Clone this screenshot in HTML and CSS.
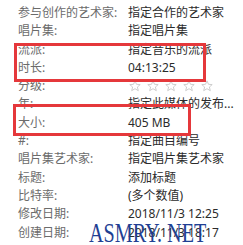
FILE: index.html
```html
<!DOCTYPE html>
<html lang="zh">
<head>
<meta charset="utf-8">
<link rel="stylesheet" href="styles.css">
</head>
<body>
<div class="props">
  <div class="row"><span class="label">参与创作的艺术家:</span><span class="value">指定合作的艺术家</span></div>
  <div class="row"><span class="label">唱片集:</span><span class="value">指定唱片集</span></div>
  <div class="row"><span class="label">流派:</span><span class="value">指定音乐的流派</span></div>
  <div class="row"><span class="label">时长:</span><span class="value">04:13:25</span></div>
  <div class="row"><span class="label">分级:</span><span class="value stars">
    <svg viewBox="0 0 12 12"><path d="M6 .8l1.5 3.5 3.7.3-2.8 2.4.9 3.7L6 8.7 2.7 10.7l.9-3.7L.8 4.6l3.7-.3z"/></svg>
    <svg viewBox="0 0 12 12"><path d="M6 .8l1.5 3.5 3.7.3-2.8 2.4.9 3.7L6 8.7 2.7 10.7l.9-3.7L.8 4.6l3.7-.3z"/></svg>
    <svg viewBox="0 0 12 12"><path d="M6 .8l1.5 3.5 3.7.3-2.8 2.4.9 3.7L6 8.7 2.7 10.7l.9-3.7L.8 4.6l3.7-.3z"/></svg>
    <svg viewBox="0 0 12 12"><path d="M6 .8l1.5 3.5 3.7.3-2.8 2.4.9 3.7L6 8.7 2.7 10.7l.9-3.7L.8 4.6l3.7-.3z"/></svg>
    <svg viewBox="0 0 12 12"><path d="M6 .8l1.5 3.5 3.7.3-2.8 2.4.9 3.7L6 8.7 2.7 10.7l.9-3.7L.8 4.6l3.7-.3z"/></svg>
  </span></div>
  <div class="row"><span class="label">年:</span><span class="value">指定此媒体的发布...</span></div>
  <div class="row"><span class="label">大小:</span><span class="value">405 MB</span></div>
  <div class="row"><span class="label">#:</span><span class="value">指定曲目编号</span></div>
  <div class="row"><span class="label">唱片集艺术家:</span><span class="value">指定唱片集艺术家</span></div>
  <div class="row"><span class="label">标题:</span><span class="value">添加标题</span></div>
  <div class="row"><span class="label">比特率:</span><span class="value">(多个数值)</span></div>
  <div class="row"><span class="label">修改日期:</span><span class="value">2018/11/3 12:25</span></div>
  <div class="row"><span class="label">创建日期:</span><span class="value">2018/11/3 18:17</span></div>
</div>
<div class="mark mark-duration"></div>
<div class="mark mark-size"></div>
<div class="watermark">ASMRY. NET</div>
</body>
</html>
```
FILE: styles.css
```css
html, body {
  margin: 0;
  padding: 0;
  background: #ffffff;
  overflow: hidden;
}
body {
  width: 243px;
  height: 245px;
  position: relative;
  font-family: "Noto Sans", "Noto Sans CJK SC", sans-serif;
  font-size: 12px;
}
.props {
  padding: 4px 0 0 18px;
}
.row {
  display: grid;
  grid-template-columns: 110px 1fr;
  height: 18.3px;
  line-height: 18px;
  white-space: nowrap;
}
.label {
  color: #6b6b6b;
}
.value {
  color: #2b2b2b;
}
.stars {
  display: flex;
  align-items: center;
  gap: 6px;
  padding-left: 1px;
}
.stars svg {
  width: 12px;
  height: 12px;
  fill: none;
  stroke: #c8c8c8;
  stroke-width: 0.9;
}
.mark {
  position: absolute;
  border: 3px solid #e5383b;
  box-sizing: border-box;
}
.mark-duration {
  left: 14px;
  top: 43px;
  width: 192px;
  height: 39px;
}
.mark-size {
  left: 13px;
  top: 104px;
  width: 178px;
  height: 32px;
}
.watermark {
  position: absolute;
  left: 89px;
  top: 218px;
  font-family: "Liberation Serif", serif;
  font-size: 28px;
  line-height: 30px;
  color: #1f3f93;
  transform: scaleX(0.72);
  transform-origin: left top;
  white-space: nowrap;
}
```
